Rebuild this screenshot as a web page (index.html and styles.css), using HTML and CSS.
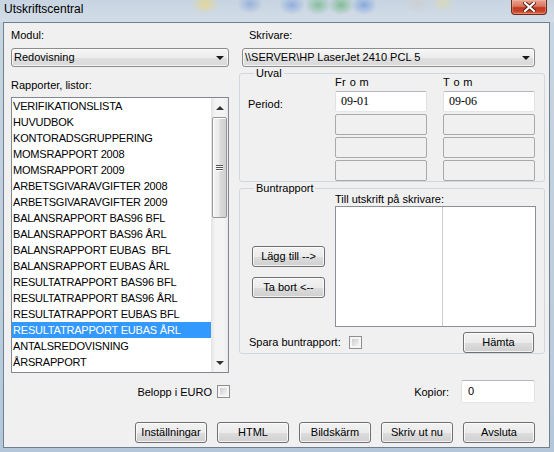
FILE: index.html
```html
<!DOCTYPE html>
<html lang="sv">
<head>
<meta charset="utf-8">
<title>Utskriftscentral</title>
<link rel="stylesheet" href="styles.css">
</head>
<body>
<div class="window">
  <div class="titlebar">
    <span class="title">Utskriftscentral</span>
    <span class="close">
      <svg width="13" height="10" viewBox="0 0 13 10"><path d="M2 1 L11 9 M11 1 L2 9" stroke="#5a1a10" stroke-width="4" stroke-linecap="square"/><path d="M2 1 L11 9 M11 1 L2 9" stroke="#ffffff" stroke-width="2.2" stroke-linecap="square"/></svg>
    </span>
  </div>
  <div class="client">
    <div class="main">
      <div class="col">
        <span class="lbl">Modul:</span>
        <div class="select"><span class="select-text">Redovisning</span><i class="arrow-down"></i></div>
        <span class="lbl lbl-rapp">Rapporter, listor:</span>
        <div class="listbox">
          <ul class="items">
            <li>VERIFIKATIONSLISTA</li>
            <li>HUVUDBOK</li>
            <li>KONTORADSGRUPPERING</li>
            <li>MOMSRAPPORT 2008</li>
            <li>MOMSRAPPORT 2009</li>
            <li>ARBETSGIVARAVGIFTER 2008</li>
            <li>ARBETSGIVARAVGIFTER 2009</li>
            <li>BALANSRAPPORT BAS96 BFL</li>
            <li>BALANSRAPPORT BAS96 ÅRL</li>
            <li>BALANSRAPPORT EUBAS&nbsp; BFL</li>
            <li>BALANSRAPPORT EUBAS ÅRL</li>
            <li>RESULTATRAPPORT BAS96 BFL</li>
            <li>RESULTATRAPPORT BAS96 ÅRL</li>
            <li>RESULTATRAPPORT EUBAS BFL</li>
            <li class="sel">RESULTATRAPPORT EUBAS ÅRL</li>
            <li>ANTALSREDOVISNING</li>
            <li>ÅRSRAPPORT</li>
          </ul>
          <div class="scrollbar">
            <div class="sb-btn"><i class="arrow-up"></i></div>
            <div class="thumb"><i class="grip"></i><i class="grip"></i><i class="grip"></i></div>
            <div class="sb-track"></div>
            <div class="sb-btn"><i class="arrow-down small"></i></div>
          </div>
        </div>
      </div>
      <div class="col">
        <span class="lbl lbl-skriv">Skrivare:</span>
        <div class="select select-wide"><span class="select-text">\\SERVER\HP LaserJet 2410 PCL 5</span><i class="arrow-down"></i></div>
        <fieldset class="group urval">
          <legend>Urval</legend>
          <div class="urval-grid">
            <span></span><span class="colhead">Fr o m</span><span class="colhead">T o m</span>
            <span class="period">Period:</span><div class="tb filled">09-01</div><div class="tb filled">09-06</div>
            <span></span><div class="tb"></div><div class="tb"></div>
            <span></span><div class="tb"></div><div class="tb"></div>
            <span></span><div class="tb"></div><div class="tb"></div>
          </div>
        </fieldset>
        <fieldset class="group bunt">
          <legend>Buntrapport</legend>
          <div class="bunt-grid">
            <span></span>
            <span class="till">Till utskrift på skrivare:</span>
            <div class="btncol">
              <button class="btn btn-mid">Lägg till --&gt;</button>
              <button class="btn btn-mid">Ta bort &lt;--</button>
            </div>
            <div class="listview"><div class="lv-col"></div></div>
            <div class="bunt-foot">
              <span class="spara">Spara buntrapport:</span>
              <span class="chk chk-spara"></span>
              <button class="btn btn-hamta">Hämta</button>
            </div>
          </div>
        </fieldset>
      </div>
    </div>
    <div class="options">
      <div class="opt-left">
        <span>Belopp i EURO</span>
        <span class="chk chk-euro"></span>
      </div>
      <div class="opt-right">
        <span>Kopior:</span>
        <div class="tb filled kopior">0</div>
      </div>
    </div>
    <div class="actions">
      <button class="btn">Inställningar</button>
      <button class="btn">HTML</button>
      <button class="btn">Bildskärm</button>
      <button class="btn">Skriv ut nu</button>
      <button class="btn">Avsluta</button>
    </div>
  </div>
</div>
</body>
</html>
```
FILE: styles.css
```css
html, body {
  margin: 0;
  padding: 0;
}
body {
  width: 554px;
  height: 452px;
  overflow: hidden;
  font-family: "Liberation Sans", Arial, sans-serif;
  font-size: 11px;
  color: #000;
  background: #b9cbdc;
}
.window {
  width: 554px;
  height: 452px;
  display: flex;
  flex-direction: column;
  background: linear-gradient(to bottom, #c9d6e2, #b4c7da);
}
.titlebar {
  height: 22px;
  flex: none;
  display: flex;
  justify-content: space-between;
  align-items: flex-start;
  background:
    radial-gradient(ellipse 14px 10px at 205px 4px, rgba(236, 214, 120, .7), transparent),
    radial-gradient(ellipse 13px 10px at 250px 4px, rgba(130, 160, 215, .65), transparent),
    radial-gradient(ellipse 13px 10px at 292px 5px, rgba(110, 150, 220, .6), transparent),
    radial-gradient(ellipse 13px 10px at 318px 5px, rgba(100, 180, 120, .65), transparent),
    radial-gradient(ellipse 13px 10px at 341px 5px, rgba(95, 175, 110, .65), transparent),
    radial-gradient(ellipse 13px 10px at 364px 5px, rgba(100, 145, 220, .65), transparent),
    radial-gradient(ellipse 13px 9px at 418px 4px, rgba(205, 205, 205, .7), transparent),
    radial-gradient(ellipse 12px 9px at 443px 3px, rgba(230, 220, 160, .55), transparent),
    linear-gradient(to bottom, #c7d4e1, #d3dde7);
}
.title {
  font-size: 12px;
  line-height: 14px;
  padding: 2px 0 0 4px;
  color: #000;
}
.close {
  width: 36px;
  height: 15px;
  margin-right: 7px;
  box-sizing: border-box;
  border: 1px solid #6a2a1c;
  border-top: none;
  border-radius: 0 0 4px 4px;
  background: linear-gradient(to bottom, #e9a391 0%, #d8775f 45%, #c23a20 55%, #c9452a 80%, #da6e52 100%);
  box-shadow: inset 0 0 0 1px rgba(255, 200, 180, .35);
  display: flex;
  align-items: center;
  justify-content: center;
}
.client {
  margin: 0 4px 0 3px;
  height: 426px;
  box-sizing: border-box;
  border: 1px solid #6e7f90;
  background: #f0f0f0;
}
.main {
  display: grid;
  grid-template-columns: 218px 306px;
  column-gap: 10px;
  padding: 6px 0 0 7px;
}
.col {
  display: flex;
  flex-direction: column;
  align-items: flex-start;
}
.lbl {
  display: block;
  line-height: 13px;
  height: 13px;
  white-space: nowrap;
}
.lbl-skriv {
  padding-left: 10px;
}
.lbl-rapp {
  margin-top: 12px;
}
.select {
  margin-top: 6px;
  width: 218px;
  height: 19px;
  box-sizing: border-box;
  border: 1px solid #8a8b8c;
  border-radius: 3px;
  background: linear-gradient(to bottom, #f6f6f6 0%, #ececec 50%, #e0e0e0 51%, #d9d9d9 100%);
  box-shadow: inset 0 0 0 1px rgba(255, 255, 255, .7);
  display: flex;
  align-items: center;
}
.select-wide {
  margin-left: 3px;
  width: 293px;
}
.select-text {
  padding-left: 2px;
  line-height: 17px;
  white-space: nowrap;
}
.arrow-down {
  display: block;
  margin-left: auto;
  margin-right: 4px;
  width: 0;
  height: 0;
  border-left: 4px solid transparent;
  border-right: 4px solid transparent;
  border-top: 4px solid #1a1a1a;
}
.arrow-down.small {
  margin: 0;
  border-top: 4px solid #333;
}
.arrow-up {
  display: block;
  width: 0;
  height: 0;
  border-left: 4px solid transparent;
  border-right: 4px solid transparent;
  border-bottom: 4px solid #333;
}
.listbox {
  margin-top: 5px;
  width: 218px;
  height: 276px;
  box-sizing: border-box;
  border: 1px solid #828790;
  background: #fff;
  display: flex;
}
.items {
  margin: 0;
  padding: 0;
  list-style: none;
  width: 199px;
  flex: none;
}
.items li {
  height: 16px;
  line-height: 16px;
  padding-left: 1px;
  white-space: nowrap;
  overflow: hidden;
  letter-spacing: -0.2px;
}
.items li.sel {
  background: #3399ff;
  color: #fff;
}
.scrollbar {
  width: 17px;
  flex: none;
  display: flex;
  flex-direction: column;
  background: linear-gradient(to right, #e4e4e4 0%, #f4f4f4 25%, #f4f4f4 75%, #eaeaea 100%);
}
.sb-btn {
  height: 19px;
  flex: none;
  display: flex;
  align-items: center;
  justify-content: center;
}
.thumb {
  margin: 0 1px;
  height: 101px;
  flex: none;
  box-sizing: border-box;
  border: 1px solid #979797;
  border-radius: 2px;
  background: linear-gradient(to right, #f3f3f3 0%, #ebebeb 45%, #dadada 55%, #d0d0d0 100%);
  box-shadow: inset 1px 0 0 #fff, inset 0 1px 0 #fff;
  display: flex;
  flex-direction: column;
  align-items: center;
  justify-content: center;
  gap: 1px;
}
.grip {
  display: block;
  width: 7px;
  height: 1px;
  background: #555;
  box-shadow: 0 1px 0 #fff;
}
.sb-track {
  flex: 1;
}
fieldset.group {
  margin: 0;
  padding: 0 0 0 8px;
  width: 306px;
  box-sizing: border-box;
  min-inline-size: 0;
  border: 1px solid #d0d8de;
  border-radius: 3px;
}
fieldset.group legend {
  padding: 0 2px;
  margin-left: 6px;
  line-height: 13px;
  font-size: 11px;
}
.urval {
  margin-top: 4px;
  padding-bottom: 6px;
}
.urval-grid {
  margin-top: -4px;
  display: grid;
  grid-template-columns: 71px 92px 92px;
  column-gap: 16px;
  row-gap: 2px;
}
.colhead {
  line-height: 13px;
  letter-spacing: 0.4px;
}
.period {
  align-self: start;
  padding-top: 7px;
  line-height: 13px;
}
.tb {
  height: 21px;
  box-sizing: border-box;
  border: 1px solid #a9a9a9;
  border-radius: 2px;
  background: #f0f0f0;
}
.tb.filled {
  background: #fff;
  border-color: #b4b7bd #dfe1e6 #e3e7ec #dfe1e6;
  font-family: "Liberation Serif", "Times New Roman", serif;
  font-size: 12px;
  line-height: 19px;
  padding-left: 5px;
}
.bunt {
  margin-top: 2px;
  padding-bottom: 7px;
}
.bunt-grid {
  margin-top: -2px;
  display: grid;
  grid-template-columns: 87px 201px;
}
.till {
  line-height: 13px;
  white-space: nowrap;
}
.btncol {
  padding: 40px 0 0 4px;
  display: flex;
  flex-direction: column;
  align-items: flex-start;
  gap: 10px;
}
.listview {
  height: 121px;
  box-sizing: border-box;
  border: 1px solid #8b8f96;
  background: #fff;
}
.lv-col {
  width: 106px;
  height: 100%;
  border-right: 1px solid #cfcfcf;
}
.bunt-foot {
  grid-column: 1 / -1;
  margin-top: 5px;
  padding: 0 2px 0 1px;
  display: flex;
  align-items: center;
}
.spara {
  line-height: 13px;
}
.chk {
  display: block;
  width: 13px;
  height: 13px;
  box-sizing: border-box;
  border: 1px solid #8e8f8f;
  padding: 2px;
  background: linear-gradient(135deg, #cdcdcd, #f5f5f5) content-box, #f6f6f6;
}
.chk-spara {
  margin-left: 8px;
}
.btn {
  width: 72px;
  height: 21px;
  box-sizing: border-box;
  margin: 0;
  padding: 0;
  border: 1px solid #707070;
  border-radius: 3px;
  background: linear-gradient(to bottom, #f2f2f2 0%, #ebebeb 50%, #dddddd 51%, #cfcfcf 100%);
  box-shadow: inset 0 0 0 1px rgba(255, 255, 255, .75);
  font-family: "Liberation Sans", Arial, sans-serif;
  font-size: 11px;
  color: #000;
  line-height: 19px;
  white-space: nowrap;
}
.btn-mid {
  width: 73px;
}
.btn-hamta {
  width: 71px;
  margin-left: auto;
}
.options {
  margin-top: 7px;
  padding-left: 7px;
  display: grid;
  grid-template-columns: 218px 306px;
  column-gap: 10px;
  height: 23px;
}
.opt-left {
  display: flex;
  justify-content: flex-end;
  align-items: center;
}
.chk-euro {
  margin-left: 5px;
  margin-right: -1px;
}
.opt-right {
  display: flex;
  justify-content: flex-end;
  align-items: center;
  padding-right: 10px;
}
.tb.kopior {
  margin-left: 12px;
  width: 74px;
  height: 23px;
  font-family: "Liberation Sans", Arial, sans-serif;
  font-size: 11px;
  line-height: 21px;
  padding-left: 6px;
}
.actions {
  margin-top: 19px;
  padding-right: 14px;
  display: flex;
  justify-content: flex-end;
  gap: 10px;
}
```
